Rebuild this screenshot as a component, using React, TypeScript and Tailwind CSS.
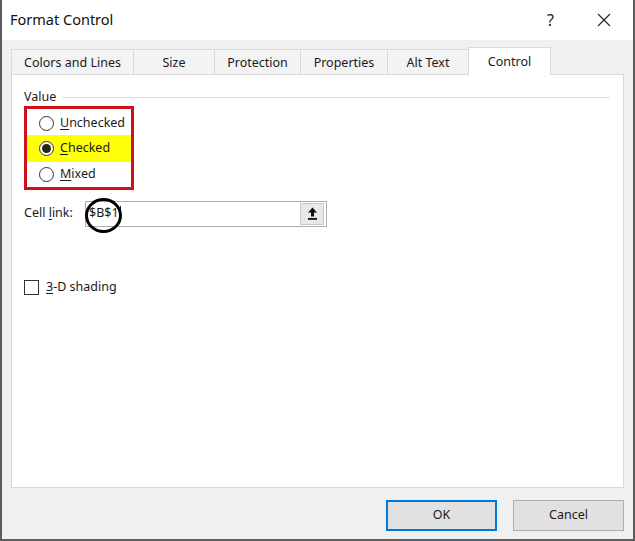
import React from 'react';

const font = { fontFamily: '"Noto Sans", "Open Sans", sans-serif' };

const tabs = [
  { label: 'Colors and Lines', w: 'w-[122px]' },
  { label: 'Size', w: 'w-[81px]' },
  { label: 'Protection', w: 'w-[86px]' },
  { label: 'Properties', w: 'w-[87px]' },
  { label: 'Alt Text', w: 'w-[81px]' },
];

function Radio({ checked }: { checked?: boolean }) {
  return (
    <span className="flex h-[15px] w-[15px] items-center justify-center rounded-full border border-[#333] bg-white">
      {checked && <span className="h-[9px] w-[9px] rounded-full bg-[#262616]" />}
    </span>
  );
}

function Option({
  label,
  hot,
  checked,
  extra = '',
}: {
  label: string;
  hot: string;
  checked?: boolean;
  extra?: string;
}) {
  const rest = label.slice(hot.length);
  return (
    <div className={`flex items-center gap-[6px] pl-[12px] ${checked ? 'bg-[#ffff0a]' : ''} ${extra}`}>
      <Radio checked={checked} />
      <span>
        <span className="underline underline-offset-2">{hot}</span>
        {rest}
      </span>
    </div>
  );
}

export default function App() {
  return (
    <div
      className="flex h-[541px] w-[635px] flex-col border-x-2 border-b-2 border-[#5c5c5c] bg-[#f0f0f0] text-[12.5px] text-[#1a1a1a]"
      style={font}
    >
      {/* title bar */}
      <div className="flex h-[40px] items-center bg-white pl-[8px]">
        <span className="text-[14.5px] text-[#111]">Format Control</span>
        <span className="ml-auto mr-[43px] text-[16px] text-[#222]">?</span>
        <svg width="14" height="14" viewBox="0 0 14 14" className="mr-[22px]">
          <path d="M1 1L13 13M13 1L1 13" stroke="#222" strokeWidth="1.1" />
        </svg>
      </div>

      <div className="mx-[9px] mt-[7px] flex flex-1 flex-col">
        {/* tabs */}
        <div className="flex h-[27px] items-end">
          {tabs.map((t) => (
            <div
              key={t.label}
              className={`flex h-[25px] items-center justify-center border-t border-l border-[#d9d9d9] bg-[#f3f3f3] pt-[3px] ${t.w}`}
            >
              {t.label}
            </div>
          ))}
          <div className="relative z-10 -mb-px flex h-[28px] w-[83px] items-center justify-center border-x border-t border-[#d9d9d9] bg-white pt-[2px]">
            Control
          </div>
        </div>

        {/* panel */}
        <div className="flex h-[414px] flex-col border border-[#d9d9d9] bg-white px-[12px]">
          <div className="mt-[13px] flex items-center">
            <span>Value</span>
            <div className="ml-[6px] mr-[1px] h-px flex-1 bg-[#dcdcdc]" />
          </div>

          <div className="-mt-px w-[110px] border-[3px] border-[#d0101a]">
            <Option label="Unchecked" hot="U" extra="h-[26px] pt-[3px]" />
            <Option label="Checked" hot="C" checked extra="h-[27px] pt-[1px]" />
            <Option label="Mixed" hot="M" extra="h-[25px]" />
          </div>

          <div className="mt-[11px] flex items-center">
            <span className="w-[61px]">
              Cell <span className="underline underline-offset-2">l</span>ink:
            </span>
            <div className="relative flex h-[26px] w-[242px] items-center border border-[#adadad] bg-white pl-[3px] pr-[2px]">
              <span>$B$1</span>
              <span className="ml-px h-[16px] w-px bg-[#222]" />
              <div className="ml-auto flex h-[22px] w-[24px] items-center justify-center border border-[#c9c9c9] bg-[#e8e8e8]">
                <svg width="11" height="13" viewBox="0 0 11 13">
                  <path d="M5.5 0.5L10 5.5H7V9.5H4V5.5H1Z" fill="#111" />
                  <rect x="1" y="11" width="9" height="1.8" fill="#111" />
                </svg>
              </div>
              <span className="absolute left-[-1px] top-[-4px] h-[35px] w-[37px] rounded-[50%] border-[3px] border-black" />
            </div>
          </div>

          <div className="mt-[51px] flex items-center gap-[7px]">
            <span className="h-[15px] w-[15px] border border-[#333] bg-white" />
            <span>
              <span className="underline underline-offset-2">3</span>-D shading
            </span>
          </div>
        </div>

        {/* footer */}
        <div className="mt-[12px] flex justify-end gap-[16px]">
          <button className="h-[31px] w-[111px] border-2 border-[#0078d7] bg-[#e1e1e1] text-[12.5px]">OK</button>
          <button className="h-[31px] w-[111px] border border-[#adadad] bg-[#e1e1e1] text-[12.5px]">Cancel</button>
        </div>
      </div>
    </div>
  );
}
